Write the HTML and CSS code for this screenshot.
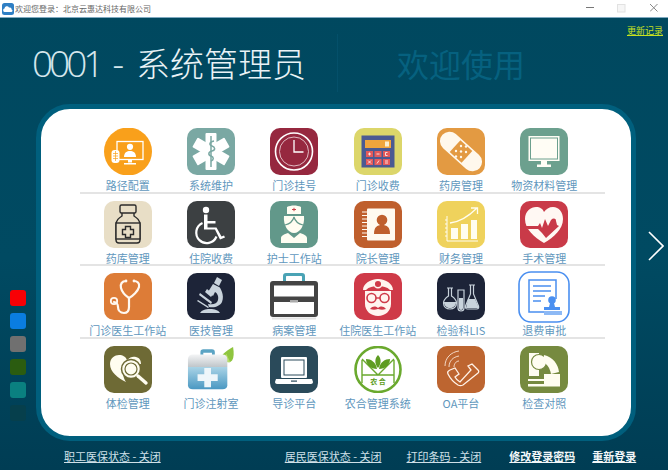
FILE: index.html
```html
<!DOCTYPE html>
<html lang="zh-CN">
<head>
<meta charset="utf-8">
<title>欢迎您登录</title>
<link rel="stylesheet" href="styles.css">
</head>
<body>
<div class="app">
  <header class="titlebar">
    <svg class="app-icon" viewBox="0 0 12 12"><rect width="12" height="12" rx="2.5" fill="#2f7fc4"/><path d="M2.5 9a1.8 1.8 0 0 1 0-3.5 2.4 2.4 0 0 1 4.5-1 2 2 0 0 1 2.6 2A1.3 1.3 0 0 1 9.500 9z" fill="#fff"/></svg>
    <span class="title-text">欢迎您登录：北京云惠达科技有限公司</span>
    <div class="win-controls">
      <svg class="win-btn" viewBox="0 0 12 12"><path d="M2 4.500h8" stroke="#777" fill="none"/></svg>
      <svg class="win-btn" viewBox="0 0 12 12"><rect x=".5" y="1.500" width="7.500" height="7.500" fill="#f6f6f6" stroke="#e2e2e2"/></svg>
      <svg class="win-btn" viewBox="0 0 12 12"><path d="M0 1l7.500 7.500M7.500 1L0 8.500" stroke="#888" fill="none"/></svg>
    </div>
  </header>

  <section class="hero">
    <h1 class="user"><span class="user-id">0001</span><span class="user-dash">-</span>系统管理员</h1>
    <div class="hero-rule"></div>
    <div class="welcome">欢迎使用</div>
    <a class="changelog">更新记录</a>
  </section>

  <main class="stage">
    <div class="themes">
      <span class="swatch swatch-red"></span>
      <span class="swatch swatch-blue"></span>
      <span class="swatch swatch-gray"></span>
      <span class="swatch swatch-green"></span>
      <span class="swatch swatch-teal"></span>
      <span class="swatch swatch-dark"></span>
    </div>

    <div class="card">
      <div class="row">
        <div class="app-item"><svg class="ico" viewBox="0 0 48 47"><circle cx="24" cy="23.500" r="24" fill="#f9a01b"/><rect x="13" y="13.500" width="26" height="18" fill="none" stroke="#fff" stroke-width="1.300"/><circle cx="26" cy="18.800" r="3.100" fill="#fff"/><path d="M20 29c0-4.500 3-6 6-6s6 1.500 6 6z" fill="#fff"/><path d="M24 31.500h4v3h-4zM20 35h12v1.500H20z" fill="#fff"/><rect x="7.500" y="22" width="8" height="13" rx="3" fill="#fff"/><path d="M9 25.500h5M9 28h5M9 30.500h5M11.500 23v10" stroke="#f9a01b" stroke-width=".7"/></svg><span class="label">路径配置</span></div>
        <div class="app-item"><svg class="ico" viewBox="0 0 48 47"><rect width="48" height="47" rx="10" fill="#7aa8a3"/><g fill="#fff"><rect x="18.500" y="5" width="11" height="37" rx="1"/><rect x="18.500" y="5" width="11" height="37" rx="1" transform="rotate(60 24 23.500)"/><rect x="18.500" y="5" width="11" height="37" rx="1" transform="rotate(-60 24 23.500)"/></g><path d="M24 8v31" stroke="#7aa8a3" stroke-width="1.500"/><path d="M27 13c-5 1-5 4-2 5s4 4 0 5-4 4-1 5 3 4 0 5" fill="none" stroke="#7aa8a3" stroke-width="1.500"/></svg><span class="label">系统维护</span></div>
        <div class="app-item"><svg class="ico" viewBox="0 0 48 47"><rect width="48" height="47" rx="10" fill="#96283f"/><circle cx="24" cy="23.500" r="18.500" fill="none" stroke="#fff" stroke-width="1.600"/><circle cx="24" cy="23.500" r="14.500" fill="none" stroke="#e8c9cf" stroke-width=".9"/><path d="M24 12v12h9.500" fill="none" stroke="#fff" stroke-width="1.300"/></svg><span class="label">门诊挂号</span></div>
        <div class="app-item"><svg class="ico" viewBox="0 0 48 47"><rect width="48" height="47" rx="10" fill="#dcd66a"/><rect x="7.500" y="7.500" width="33" height="32" fill="#4b5a92"/><rect x="11" y="12" width="26" height="8" fill="#f0a53c"/><rect x="31" y="13.500" width="4" height="5" fill="#fbeecf"/><g fill="#e55a5a"><rect x="12" y="23" width="7" height="6"/><rect x="20.500" y="23" width="7" height="6"/><rect x="29" y="23" width="7" height="6"/><rect x="12" y="31" width="7" height="6"/><rect x="20.500" y="31" width="7" height="6"/><rect x="29" y="31" width="7" height="6"/></g><path d="M14 26h3M15.500 24.500v3M22.500 26h3M33.500 24.500h-2v3h2M14 32.500l3 3M17 32.500l-3 3M23 35.500l2-3M31 33h3M31 35h3" stroke="#fff" stroke-width=".8" fill="none"/></svg><span class="label">门诊收费</span></div>
        <div class="app-item"><svg class="ico" viewBox="0 0 48 47"><rect width="48" height="47" rx="10" fill="#e39a42"/><rect x="-1" y="14" width="50" height="19" rx="9.500" fill="#fff8ec" transform="rotate(42 24 23.500)"/><rect x="16" y="15.500" width="16" height="16" fill="#e39a42" transform="rotate(42 24 23.500)"/><g fill="#fff8ec"><circle cx="24" cy="18" r="1.200"/><circle cx="19" cy="23" r="1.200"/><circle cx="24" cy="23.500" r="1.200"/><circle cx="29" cy="24" r="1.200"/><circle cx="24" cy="29" r="1.200"/><circle cx="29" cy="18.500" r="1.200"/><circle cx="19" cy="28.500" r="1.200"/></g></svg><span class="label">药房管理</span></div>
        <div class="app-item"><svg class="ico" viewBox="0 0 48 47"><rect width="48" height="47" rx="10" fill="#6ca08e"/><rect x="8.500" y="8" width="31" height="25" fill="#fffdf5"/><rect x="10.500" y="10" width="27" height="21" fill="none" stroke="#6ca08e" stroke-width="1"/><path d="M21 33h6v3.500h-6zM17 36.500h14V39H17z" fill="#fffdf5"/></svg><span class="label">物资材料管理</span></div>
      </div>
      <div class="row">
        <div class="app-item"><svg class="ico" viewBox="0 0 48 47"><rect width="48" height="47" rx="10" fill="#e8dec6"/><g fill="none" stroke="#2b2b2b" stroke-width="1.400"><rect x="16" y="4" width="16" height="8" rx="1.500"/><path d="M18 12v3c-3 2-6 4-6 9v15c0 2 1 3 3 3h18c2 0 3-1 3-3V24c0-5-3-7-6-9v-3"/><rect x="12" y="22" width="24" height="16" fill="#e8dec6"/><path d="M21.500 25.500h5v3h3v5h-3v3h-5v-3h-3v-5h3z"/></g></svg><span class="label">药库管理</span></div>
        <div class="app-item"><svg class="ico" viewBox="0 0 48 47"><rect width="48" height="47" rx="10" fill="#3c4042"/><circle cx="19" cy="9" r="3.200" fill="#fff"/><path d="M17 13.500h3.500v6.500h8v2.500h-8v4h9l5 9 2.500-1 1 2-5 2-5-10H17z" fill="#fff"/><path d="M15.500 22a10.500 10.500 0 1 0 14 13.500" fill="none" stroke="#fff" stroke-width="2.200"/></svg><span class="label">住院收费</span></div>
        <div class="app-item"><svg class="ico" viewBox="0 0 48 47"><rect width="48" height="47" rx="10" fill="#62988a"/><path d="M17 13V6c4-2 10-2 14 0v7z" fill="#fffdf2"/><path d="M22 8.500h4M24 6.800v3.400" stroke="#c9414b" stroke-width="1"/><path d="M14 15h20c1 9-4 17-10 17s-11-8-10-17z" fill="#fffdf2"/><path d="M15 24c4-1 8-4 9-8 1 4 5 7 9 8" fill="none" stroke="#62988a" stroke-width="1.200"/><path d="M11 42v-5c0-2 3-4 7-5l6 5 6-5c4 1 7 3 7 5v5z" fill="#fffdf2"/></svg><span class="label">护士工作站</span></div>
        <div class="app-item"><svg class="ico" viewBox="0 0 48 47"><rect width="48" height="47" rx="10" fill="#bf5f2d"/><rect x="13" y="7.500" width="28" height="32" rx="1" fill="#fffaf0"/><g fill="none" stroke="#fffaf0" stroke-width="1"><path d="M8 11h7M8 14.500h7M8 18h7M8 21.500h7M8 25h7M8 28.500h7M8 32h7M8 35.500h7"/></g><circle cx="28" cy="19" r="5.300" fill="#bf5f2d"/><path d="M20 33c0-7 3-9 8-9s8 2 8 9z" fill="#bf5f2d"/></svg><span class="label">院长管理</span></div>
        <div class="app-item"><svg class="ico" viewBox="0 0 48 47"><rect width="48" height="47" rx="10" fill="#efd25c"/><g fill="#fffdf0"><rect x="14" y="27" width="7" height="11"/><rect x="24" y="23" width="7" height="15"/><rect x="34" y="19" width="6" height="19"/></g><path d="M10 15v25h31M8 19h2M8 23h2M8 27h2M8 31h2M8 35h2" fill="none" stroke="#fffdf0" stroke-width="1"/><path d="M13 22c9-1 17-5 27-15M34 7h6.500v6" fill="none" stroke="#fffdf0" stroke-width="1.300"/></svg><span class="label">财务管理</span></div>
        <div class="app-item"><svg class="ico" viewBox="0 0 48 47"><rect width="48" height="47" rx="10" fill="#c93a48"/><path d="M24 42C14 36 5 28 5 18 5 10 11 6 16 6c4 0 7 2 8 5 2-3 5-5 9-5 6 0 10 5 10 12 0 10-9 18-19 24z" fill="#fff8f3"/><path d="M5 25h13l2-3 2 5 3-9 3 7 3-6c2-2 5-2 5 1l1 4 2 1-13 12-4-5-4-4H8z" fill="#c93a48"/></svg><span class="label">手术管理</span></div>
      </div>
      <div class="row">
        <div class="app-item"><svg class="ico" viewBox="0 0 48 47"><rect width="48" height="47" rx="10" fill="#dd7c37"/><g fill="none" stroke="#fff8f0" stroke-width="2.200" stroke-linecap="round"><path d="M22 8c-4 0-6 3-5 7 1 4 5 8 8 10 4-2 9-7 10-11 1-4-2-6-5-6"/><path d="M25 25v9c0 3-1 6-5 6s-6-3-6-6-2-5-4-5"/></g><circle cx="10" cy="28" r="3.200" fill="none" stroke="#fff8f0" stroke-width="1.800"/><circle cx="22" cy="8" r="1.400" fill="#fff8f0"/><circle cx="30" cy="8" r="1.400" fill="#fff8f0"/></svg><span class="label">门诊医生工作站</span></div>
        <div class="app-item"><svg class="ico" viewBox="0 0 48 47"><rect width="48" height="47" rx="10" fill="#1d2438"/><g fill="#c9d3dc"><path d="M13 40c2-3 5-4 10-4s8 1 10 4z"/><path d="M30 4l5 3-3 6-5-3z"/><path d="M26 11l6 3c1 0 6 8 3 15-2 4-7 6-13 5l-1-3c5 1 9 0 10-4 1-4-1-7-3-8l-2 4-5-4z"/><path d="M20 16l6 5-2 3-6-5z"/><path d="M13 20l12 9-1 2-12-9zM11 27l11 7-1 1-11-7z"/></g></svg><span class="label">医技管理</span></div>
        <div class="app-item"><svg class="ico" viewBox="0 0 48 47"><path d="M13 9V3c0-2 1-3 3-3h16c2 0 3 1 3 3v6h-3V4c0-.7-.3-1-1-1H17c-.7 0-1 .3-1 1v5z" fill="#4aa3b5"/><rect y="8" width="48" height="36" rx="3" fill="#444"/><rect x="4" y="12.500" width="40" height="11" fill="#fff"/><rect x="4" y="29" width="40" height="12" fill="#fff"/><rect x="20" y="27" width="8" height="2.500" fill="#aaa"/><path d="M2 45.500h44" stroke="#e3e3e3" stroke-width="2"/></svg><span class="label">病案管理</span></div>
        <div class="app-item"><svg class="ico" viewBox="0 0 48 47"><rect width="48" height="47" rx="10" fill="#cf3a48"/><path d="M9 17c0-6 7-11 15-11s15 5 15 11h-3c-3-3-7-4-12-4s-9 1-12 4z" fill="#fff5ef"/><circle cx="24" cy="11" r="3.800" fill="#cf3a48" stroke="#fff5ef" stroke-width="1.500"/><path d="M11 18h26v13c0 7-6 12-13 12s-13-5-13-12z" fill="#fff5ef"/><g fill="#fff5ef" stroke="#cf3a48" stroke-width="1.600"><circle cx="17.500" cy="25" r="4.500"/><circle cx="30.500" cy="25" r="4.500"/></g><path d="M22 25h4" stroke="#cf3a48" stroke-width="1.400"/><path d="M16 36c3-3 5-3 8-1 3-2 5-2 8 1-3 1-5 1-8 0-3 1-5 1-8 0z" fill="#cf3a48"/></svg><span class="label">住院医生工作站</span></div>
        <div class="app-item"><svg class="ico" viewBox="0 0 48 47"><rect width="48" height="47" rx="10" fill="#1d2438"/><g fill="none" stroke="#c9d3dc" stroke-width="1.200"><path d="M10 15h6M11.500 15v8c-3 2-5 4-5 7 0 4 3 6 6.500 6s6.500-2 6.500-6c0-3-2-5-5-7v-8"/><path d="M21 17h6v18a3 3 0 0 1-6 0z"/><path d="M32 12h6M33.500 12v9l-5 12c-.5 2 .5 3 2 3h9c2 0 2.500-1 2-3l-5-12v-9"/></g><g fill="#c9d3dc"><path d="M7 29h12c0 4-3 6-6 6s-6-2-6-6z"/><path d="M22 25h4v10a2 2 0 0 1-4 0z"/><path d="M31 26h7l4 9H29z"/></g></svg><span class="label">检验科LIS</span></div>
        <div class="app-item"><svg class="ico ico-wide" viewBox="0 0 52 52"><rect x="1" y="1" width="50" height="50" rx="12" fill="#fff" stroke="#4a8ff0" stroke-width="1.600"/><g fill="none" stroke="#4a8ff0" stroke-width="1.500"><path d="M32 41H11V9h27v19"/><path d="M15 15h18M15 20h18M15 25h12M15 30h8"/></g><circle cx="34" cy="29" r="3.800" fill="#4a8ff0"/><path d="M32 32h4l1 4h-6z" fill="#4a8ff0"/><rect x="26" y="36" width="16" height="3" fill="#4a8ff0"/><rect x="26" y="40" width="18" height="4" fill="#8db9f5"/></svg><span class="label">退费审批</span></div>
      </div>
      <div class="row row-last">
        <div class="app-item"><svg class="ico" viewBox="0 0 48 47"><rect width="48" height="47" rx="10" fill="#6e6a35"/><path d="M22 36C14 32 6 26 6 18c0-6 5-9 9-9 4 0 7 2 8 5 3-3 6-4 9-3 4 1 5 4 5 7H20c-3 4-1 14 2 18z" fill="#fffdf0"/><circle cx="27" cy="23" r="9.500" fill="#fffdf0" stroke="#6e6a35" stroke-width="1.500"/><circle cx="27" cy="23" r="6" fill="none" stroke="#6e6a35" stroke-width="1.200"/><path d="M34 30l8 7" stroke="#fffdf0" stroke-width="3.400" stroke-linecap="round"/></svg><span class="label">体检管理</span></div>
        <div class="app-item"><svg class="ico" viewBox="0 0 50 47"><defs><linearGradient id="boxBody" x1="0" y1="0" x2="0" y2="1"><stop offset="0" stop-color="#a9d3e6"/><stop offset="1" stop-color="#4a98c2"/></linearGradient><linearGradient id="boxLid" x1="0" y1="0" x2="0" y2="1"><stop offset="0" stop-color="#f3f4f5"/><stop offset="1" stop-color="#bfc5c9"/></linearGradient></defs><path d="M14 9V5.500c0-2 1-3 3-3h9c2 0 3 1 3 3V9h-3V6H17v3z" fill="#5ba4c4"/><path d="M36 11c0-4 7-8 12-11 1 6 1 11-1 14-3 3-7 3-11-3z" fill="#8fc53f"/><path d="M41 7l-5 8 9 1z" fill="#b7dc6a"/><path d="M1 13c0-3 2-5 5-5h31c3 0 5 2 5 5v8H1z" fill="url(#boxLid)"/><path d="M1 21h41v19c0 3-2 4-5 4H6c-3 0-5-1-5-4z" fill="url(#boxBody)"/><path d="M18 22h7v6.500h7v7h-7V42h-7v-6.500h-7v-7h7z" fill="#eef6fa"/></svg><span class="label">门诊注射室</span></div>
        <div class="app-item"><svg class="ico" viewBox="0 0 48 47"><rect width="48" height="47" rx="10" fill="#2a4a5a"/><rect x="11" y="11" width="26" height="21" rx="1" fill="#fff"/><rect x="13.500" y="13.500" width="21" height="16" fill="#2a4a5a"/><rect x="14.500" y="14.500" width="19" height="14" fill="#fff"/><path d="M6 33h36l1 3c0 1-1 2-2 2H7c-1 0-2-1-2-2z" fill="#fff"/><rect x="21" y="34.500" width="6" height="1.200" fill="#2a4a5a"/></svg><span class="label">导诊平台</span></div>
        <div class="app-item"><svg class="ico" viewBox="0 0 48 47"><circle cx="24" cy="23.500" r="22.500" fill="#fff" stroke="#6aa92e" stroke-width="2.600"/><path d="M8 14v23M40 14v23M8 29h32M8 13l16 16 16-16" fill="none" stroke="#6aa92e" stroke-width="1.400"/><path d="M24 9c3 3 4 8 0 13-4-5-3-10 0-13zM12 13c5 0 10 3 11 10-6 0-11-4-11-10zM36 13c-5 0-10 3-11 10 6 0 11-4 11-10z" fill="#5e9c22"/><rect x="9" y="30" width="30" height="8.500" fill="#fff"/><text class="ico-text" x="24" y="37.500">农 合</text></svg><span class="label">农合管理系统</span></div>
        <div class="app-item"><svg class="ico" viewBox="0 0 48 47"><rect width="48" height="47" rx="10" fill="#bd6530"/><path d="M35 18l6 6c1 1 1 2 0 3L26 39c-2 1-3 1-5 0-5-3-8-7-10-11-1-2 0-3 2-4l5-2 4 6-4 3c1 2 3 4 5 5l11-12-3-4z" fill="none" stroke="#fff1e6" stroke-width="1.300"/><path d="M12 21c0-6 4-10 10-11M17 21c0-3 2-6 5-6M8 20c0-8 6-14 14-15" fill="none" stroke="#f3d7c4" stroke-width="1"/></svg><span class="label">OA平台</span></div>
        <div class="app-item"><svg class="ico" viewBox="0 0 48 47"><rect width="48" height="47" rx="10" fill="#768a3f"/><path d="M9 7h10v23H9z" fill="#fffdf0"/><circle cx="19" cy="16" r="7.500" fill="#fffdf0" stroke="#768a3f" stroke-width="1.200"/><path d="M24 9c9 2 14 9 15 17l-8 2c-1-6-4-10-8-12z" fill="#fffdf0"/><path d="M24 28h16v10H24z" fill="#fffdf0"/><path d="M8 33h19v2H8zM8 38h32v2.500H8z" fill="#fffdf0"/></svg><span class="label">检查对照</span></div>
      </div>
    </div>

    <svg class="next" viewBox="0 0 16 30"><path d="M1 1l14 14L1 29" fill="none" stroke="#fff" stroke-width="1.600"/></svg>
  </main>

  <footer class="statusbar">
    <a class="link link-a">职工医保状态 - 关闭</a>
    <a class="link link-b">居民医保状态 - 关闭</a>
    <a class="link link-c">打印条码 - 关闭</a>
    <a class="link link-d link-strong">修改登录密码</a>
    <a class="link link-e link-strong">重新登录</a>
  </footer>
</div>
</body>
</html>
```

FILE: styles.css
```css
* { box-sizing: border-box; }
html, body { margin: 0; padding: 0; }
body {
  width: 668px;
  height: 470px;
  overflow: hidden;
  font-family: "Noto Sans CJK SC", "Liberation Sans", sans-serif;
}
.app {
  width: 668px;
  height: 470px;
  display: flex;
  flex-direction: column;
  background: linear-gradient(180deg, #00485f 0%, #004a62 55%, #003d54 100%);
}
.titlebar {
  height: 18px;
  flex: none;
  display: flex;
  align-items: center;
  background: #fff;
  border-bottom: 1px solid #7fa9c0;
  padding-left: 2px;
}
.app-icon { width: 12px; height: 12px; flex: none; }
.title-text { margin-left: 1px; font-size: 8px; line-height: 12px; color: #666; }
.win-controls { margin-left: auto; display: flex; gap: 21px; padding-right: 6px; }
.win-btn { width: 12px; height: 12px; display: block; }

.hero {
  height: 86px;
  flex: none;
  display: flex;
  align-items: flex-start;
  position: relative;
}
.user {
  margin: 22px 0 0 32px;
  width: 305px;
  font-size: 34px;
  line-height: 46px;
  font-weight: 300;
  color: #eaf3f6;
  white-space: nowrap;
}
.user-id {
  font-family: "Open Sans", sans-serif;
  font-size: 37px;
  font-weight: 300;
  letter-spacing: -4px;
  color: #d5e6ec;
}
.user-dash {
  font-family: "Open Sans", sans-serif;
  font-size: 36px;
  font-weight: 300;
  margin: 0 12px 0 12px;
  color: #d5e6ec;
}
.hero-rule { width: 1px; height: 58px; margin-top: 16px; background: #04506a; }
.welcome {
  margin: 24px 0 0 59px;
  font-size: 32px;
  line-height: 42px;
  color: #06617f;
  white-space: nowrap;
}
.changelog {
  position: absolute;
  right: 5px;
  top: 6px;
  font-size: 9px;
  line-height: 13px;
  color: #c9e21e;
  text-decoration: underline;
}

.stage {
  flex: none;
  height: 337px;
  display: flex;
}
.themes {
  width: 36px;
  flex: none;
  display: flex;
  flex-direction: column;
  gap: 7px;
  padding: 186px 0 0 10px;
}
.swatch { width: 16px; height: 16px; border-radius: 3px; display: block; flex: none; }
.swatch-red { background: #f80005; }
.swatch-blue { background: #0a7de0; }
.swatch-gray { background: #707070; }
.swatch-green { background: #2b5c10; }
.swatch-teal { background: #0a8080; }
.swatch-dark { background: #063f4c; }

.card {
  width: 600px;
  flex: none;
  height: 337px;
  background: #fff;
  border: 5px solid #005f7d;
  border-radius: 34px;
  padding: 12px 0 0 39px;
}
.row {
  width: 525px;
  height: 72.6px;
  display: grid;
  grid-template-columns: repeat(6, 83.33px);
  padding: 7px 0 0 6px;
  border-bottom: 2px solid #e4e4e4;
}
.row-last { border-bottom: 0; }
.app-item {
  display: flex;
  flex-direction: column;
  align-items: center;
  height: 64px;
  position: relative;
}
.ico { width: 48px; height: 47px; display: block; flex: none; }
.ico-wide { width: 52px; height: 52px; margin-top: -2px; margin-bottom: -3px; }
.ico-text { font-size: 7px; font-weight: 700; text-anchor: middle; fill: #5e9c22; font-family: "Noto Sans CJK SC", sans-serif; }
.label {
  margin-top: 3px;
  font-size: 11px;
  line-height: 14px;
  color: #5f97bd;
  white-space: nowrap;
}
.next { width: 16px; height: 30px; flex: none; margin: 127px 0 0 12px; display: block; }

.statusbar {
  flex: 1;
  display: flex;
  align-items: flex-start;
  padding: 8px 0 0 64px;
}
.link {
  font-size: 11px;
  line-height: 14px;
  color: #cfe0e8;
  text-decoration: underline;
  white-space: nowrap;
}
.link-b { margin-left: 124px; }
.link-c { margin-left: 25px; }
.link-d { margin-left: 28px; }
.link-e { margin-left: 17px; }
.link-strong { font-weight: 700; color: #f2f7f9; }
```
